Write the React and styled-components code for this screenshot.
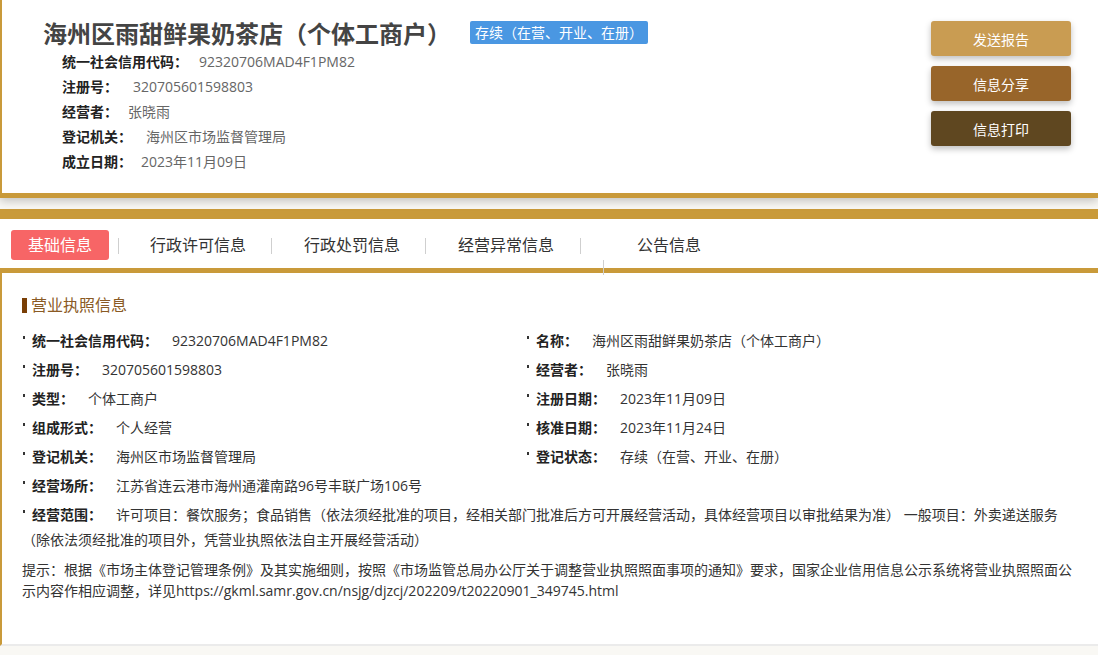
import React from 'react';
import styled, { createGlobalStyle } from 'styled-components';

const GlobalStyle = createGlobalStyle`
  body {
    margin: 0;
    background: #f9f8f4;
    font-family: "Open Sans", "Noto Sans CJK SC", sans-serif;
    color: #333;
  }
`;

const GOLD = '#c99a3a';

const Page = styled.div`
  width: 1098px;
`;

const TopCard = styled.div`
  display: flex;
  justify-content: space-between;
  background: #fff;
  border-left: 2px solid ${GOLD};
  border-bottom: 5px solid ${GOLD};
  height: 198px;
  box-sizing: border-box;
  box-shadow: 0 3px 9px rgba(0, 0, 0, 0.22);
  margin-bottom: 11px;
  position: relative;
  z-index: 1;
`;

const Summary = styled.div`
  padding: 19px 0 0 41px;
`;

const HeaderRow = styled.div`
  display: flex;
  align-items: center;
  height: 26px;
`;

const Title = styled.h1`
  margin: 0;
  font-size: 24px;
  font-weight: 700;
  color: #444;
`;

const Badge = styled.span`
  margin-left: 19px;
  background: #4a97e2;
  color: #fff;
  font-size: 14px;
  line-height: 23px;
  padding: 0 5px;
  border-radius: 2px;
`;

const InfoList = styled.div`
  margin: 4px 0 0 19px;
`;

const InfoRow = styled.div`
  font-size: 14px;
  line-height: 25px;
`;

const InfoLabel = styled.span`
  font-weight: 700;
  color: #222;
`;

const InfoValue = styled.span`
  color: #666;
  margin-left: ${p => p.$gap}px;
`;

const Actions = styled.div`
  display: flex;
  flex-direction: column;
  gap: 10px;
  padding: 21px 27px 0 0;
`;

const ActionButton = styled.button`
  width: 140px;
  height: 35px;
  border: none;
  border-radius: 3px;
  background: ${p => p.$bg};
  color: #fff;
  font-family: inherit;
  font-size: 14px;
  box-shadow: 0 3px 6px rgba(0, 0, 0, 0.25);
  cursor: pointer;
`;

const DetailCard = styled.div`
  background: #fff;
  border-top: 10px solid ${GOLD};
`;

const TabBar = styled.div`
  display: flex;
  align-items: center;
  height: 54px;
  box-sizing: border-box;
  padding: 11px 0 8px 11px;
  border-bottom: 5px solid ${GOLD};
  position: relative;
`;

const ActiveTab = styled.div`
  width: 98px;
  height: 30px;
  line-height: 30px;
  text-align: center;
  background: #f76566;
  color: #fff;
  font-size: 16px;
  border-radius: 3px;
`;

const Tab = styled.div`
  font-size: 16px;
  line-height: 30px;
  color: #333;
  padding: 0 ${p => p.$pr}px 0 ${p => p.$pl}px;
`;

const TabSep = styled.span`
  width: 1px;
  height: 16px;
  margin-top: 2px;
  background: #cfcfcf;
  margin-left: ${p => p.$ml || 0}px;
`;

const StrayLine = styled.span`
  position: absolute;
  left: 603px;
  top: 41px;
  width: 1px;
  height: 15px;
  background: #cfcfcf;
`;

const Content = styled.div`
  border-left: 2px solid ${GOLD};
  border-bottom: 2px solid #ebebeb;
  padding: 22px 26px 43px 20px;
`;

const SectionTitle = styled.div`
  display: flex;
  align-items: center;
  gap: 4px;
  font-size: 16px;
  line-height: 20px;
  color: #8a5a24;
  &::before {
    content: '';
    width: 5px;
    height: 15px;
    background: #7a3f06;
  }
`;

const Fields = styled.div`
  display: grid;
  grid-template-columns: 504px 1fr;
  margin-top: 11px;
`;

const Field = styled.div`
  grid-column: ${p => (p.$wide ? '1 / -1' : 'auto')};
  font-size: 14px;
  line-height: ${p => (p.$wide && p.$multi ? '25px' : '29px')};
  margin-top: ${p => (p.$multi ? '2px' : '0')};
  color: #333;
  &::before {
    content: '';
    display: inline-block;
    width: 2px;
    height: 3px;
    background: #333;
    margin: 0 7px 0 1px;
    vertical-align: 7px;
  }
`;

const Label = styled.span`
  font-weight: 700;
  color: #222;
`;

const Value = styled.span`
  margin-left: 14px;
`;

const Tip = styled.p`
  margin: 7px 0 0 0;
  font-size: 14px;
  line-height: 21px;
  color: #333;
  text-align: justify;
  width: 1050px;
`;

const summary = [
  ['统一社会信用代码：', '92320706MAD4F1PM82', 11],
  ['注册号：', '320705601598803', 15],
  ['经营者：', '张晓雨', 10],
  ['登记机关：', '海州区市场监督管理局', 14],
  ['成立日期：', '2023年11月09日', 9],
];

const fields = [
  ['统一社会信用代码：', '92320706MAD4F1PM82'],
  ['名称：', '海州区雨甜鲜果奶茶店（个体工商户）'],
  ['注册号：', '320705601598803'],
  ['经营者：', '张晓雨'],
  ['类型：', '个体工商户'],
  ['注册日期：', '2023年11月09日'],
  ['组成形式：', '个人经营'],
  ['核准日期：', '2023年11月24日'],
  ['登记机关：', '海州区市场监督管理局'],
  ['登记状态：', '存续（在营、开业、在册）'],
];

const tabs = [
  ['行政许可信息', 31, 25],
  ['行政处罚信息', 32, 25],
  ['经营异常信息', 32, 26],
  ['公告信息', 56, 0],
];

export default function App() {
  return (
    <Page>
      <GlobalStyle />
      <TopCard>
        <Summary>
          <HeaderRow>
            <Title>海州区雨甜鲜果奶茶店（个体工商户）</Title>
            <Badge>存续（在营、开业、在册）</Badge>
          </HeaderRow>
          <InfoList>
            {summary.map(([label, value, gap]) => (
              <InfoRow key={label}>
                <InfoLabel>{label}</InfoLabel>
                <InfoValue $gap={gap}>{value}</InfoValue>
              </InfoRow>
            ))}
          </InfoList>
        </Summary>
        <Actions>
          <ActionButton $bg="#c99c52">发送报告</ActionButton>
          <ActionButton $bg="#98652a">信息分享</ActionButton>
          <ActionButton $bg="#5f4720">信息打印</ActionButton>
        </Actions>
      </TopCard>

      <DetailCard>
        <TabBar>
          <ActiveTab>基础信息</ActiveTab>
          <TabSep $ml={9} />
          {tabs.map(([name, pl, pr], i) => (
            <React.Fragment key={name}>
              <Tab $pl={pl} $pr={pr}>{name}</Tab>
              {i < tabs.length - 1 && <TabSep />}
            </React.Fragment>
          ))}
          <StrayLine />
        </TabBar>

        <Content>
          <SectionTitle>营业执照信息</SectionTitle>
          <Fields>
            {fields.map(([label, value]) => (
              <Field key={label + value}>
                <Label>{label}</Label>
                <Value>{value}</Value>
              </Field>
            ))}
            <Field $wide>
              <Label>经营场所：</Label>
              <Value>江苏省连云港市海州通灌南路96号丰联广场106号</Value>
            </Field>
            <Field $wide $multi>
              <Label>经营范围：</Label>
              <Value>
                许可项目：餐饮服务；食品销售（依法须经批准的项目，经相关部门批准后方可开展经营活动，具体经营项目以审批结果为准） 一般项目：外卖递送服务（除依法须经批准的项目外，凭营业执照依法自主开展经营活动）
              </Value>
            </Field>
          </Fields>
          <Tip>
            提示：根据《市场主体登记管理条例》及其实施细则，按照《市场监管总局办公厅关于调整营业执照照面事项的通知》要求，国家企业信用信息公示系统将营业执照照面公示内容作相应调整，详见https://gkml.samr.gov.cn/nsjg/djzcj/202209/t20220901_349745.html
          </Tip>
        </Content>
      </DetailCard>
    </Page>
  );
}
